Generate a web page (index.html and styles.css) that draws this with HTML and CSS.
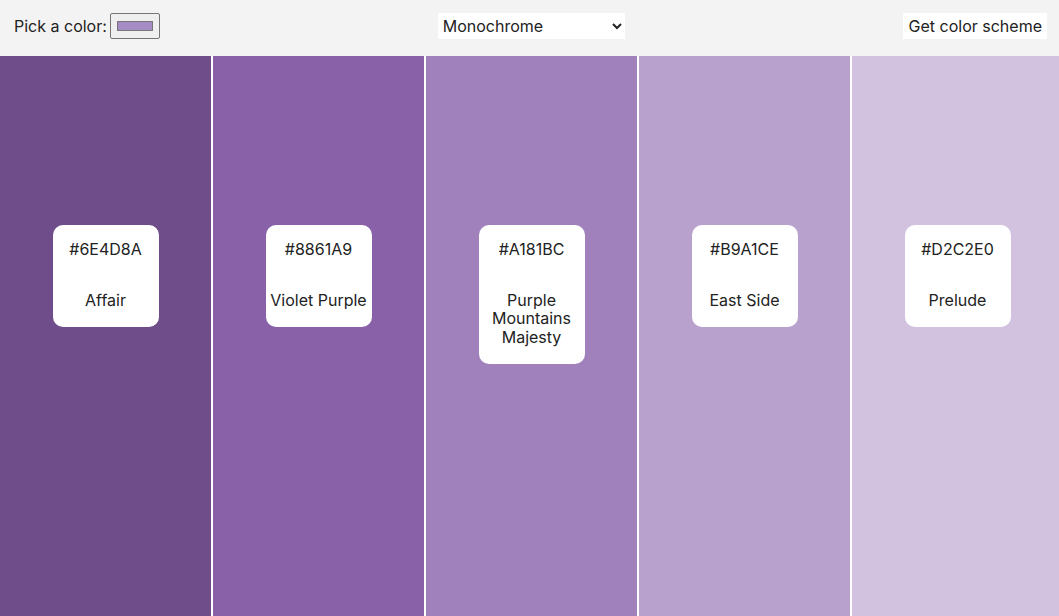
FILE: index.html
```html
<!DOCTYPE html>
<html lang="en">
<head>
  <meta charset="UTF-8">
  <meta name="viewport" content="width=device-width, initial-scale=1.0">
  <title>Color Scheme Generator</title>
  <link rel="stylesheet" href="styles.css">
</head>
<body>
  <header class="controls">
    <label class="picker">Pick a color: <input type="color" id="seed" value="#a68cc4"></label>
    <select id="mode" class="mode">
      <option>Monochrome</option>
      <option>Monochrome Dark</option>
      <option>Monochrome Light</option>
      <option>Analogic</option>
      <option>Complement</option>
    </select>
    <button class="get-btn">Get color scheme</button>
  </header>

  <main class="scheme">
    <div class="swatch" style="background-color: #6E4D8A">
      <div class="card"><p class="hex">#6E4D8A</p><p class="name">Affair</p></div>
    </div>
    <div class="swatch" style="background-color: #8861A9">
      <div class="card"><p class="hex">#8861A9</p><p class="name">Violet Purple</p></div>
    </div>
    <div class="swatch" style="background-color: #A181BC">
      <div class="card"><p class="hex">#A181BC</p><p class="name">Purple Mountains Majesty</p></div>
    </div>
    <div class="swatch" style="background-color: #B9A1CE">
      <div class="card"><p class="hex">#B9A1CE</p><p class="name">East Side</p></div>
    </div>
    <div class="swatch" style="background-color: #D2C2E0">
      <div class="card"><p class="hex">#D2C2E0</p><p class="name">Prelude</p></div>
    </div>
  </main>
</body>
</html>
```

FILE: styles.css
```css
* {
  margin: 0;
  padding: 0;
  box-sizing: border-box;
  font-family: Inter, "DejaVu Sans", sans-serif;
}

body {
  display: flex;
  flex-direction: column;
  height: 100vh;
  overflow: hidden;
  background-color: #ffffff;
  color: #222222;
}

/* Top controls */
.controls {
  height: 56px;
  flex-shrink: 0;
  display: flex;
  align-items: center;
  justify-content: space-between;
  padding: 0 12px 5px 14px;
  background-color: #f3f3f3;
  font-size: 16px;
}

.picker {
  display: flex;
  align-items: center;
  color: #222222;
}

.picker input {
  width: 50px;
  height: 26px;
  margin-left: 3px;
  border: 1px solid #767676;
  border-radius: 2px;
  padding: 3px 4px;
  background-color: #efefef;
  cursor: pointer;
}

.mode {
  width: 187px;
  height: 26px;
  border: none;
  background-color: #ffffff;
  font-size: 16px;
  padding: 0 1px;
  color: #222222;
}

.get-btn {
  height: 26px;
  padding: 0 5px 0 6px;
  border: none;
  background-color: #ffffff;
  font-size: 16px;
  color: #222222;
  cursor: pointer;
}

/* Scheme columns */
.scheme {
  flex: 1;
  display: flex;
  gap: 2px;
  overflow: hidden;
}

.swatch {
  flex: 0 0 211px;
  display: flex;
  justify-content: center;
  align-items: flex-start;
  padding-top: 169px;
}

.card {
  width: 106px;
  background-color: #ffffff;
  border-radius: 10px;
  padding: 15px 1px 18px;
  text-align: center;
  font-size: 16px;
  line-height: 18.5px;
}

.hex {
  margin-bottom: 32px;
}
```
